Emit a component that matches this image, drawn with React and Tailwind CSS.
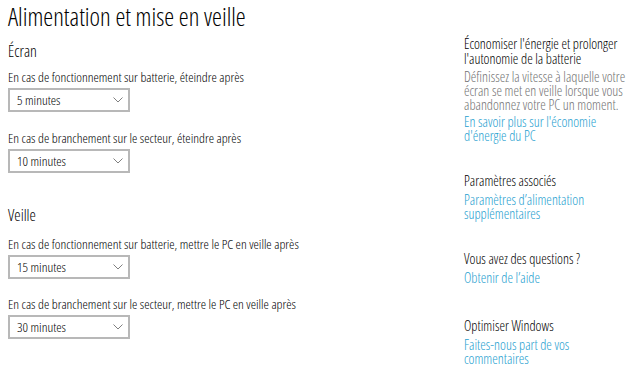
import React from "react";

const font = { fontFamily: '"Open Sans", "Noto Sans", sans-serif', fontStretch: "75%" };

function Chevron() {
  return (
    <svg width="10" height="6" viewBox="0 0 10 6" className="block">
      <path d="M0.5 0.5 L5 5 L9.5 0.5" fill="none" stroke="#808080" strokeWidth="1" />
    </svg>
  );
}

function Dropdown({ value }) {
  return (
    <div className="mt-[3px] flex h-[24px] w-[122px] items-center justify-between border-2 border-[#b8b8b8] bg-white pl-[7px] pr-[5px]">
      <span className="text-[13.5px] leading-[16px] text-black">{value}</span>
      <Chevron />
    </div>
  );
}

function Setting({ label, value, className = "" }) {
  return (
    <div className={className}>
      <div className="h-[16px] whitespace-nowrap text-[13.5px] leading-[16px] text-black">{label}</div>
      <Dropdown value={value} />
    </div>
  );
}

export default function App() {
  return (
    <div style={font} className="flex h-[371px] w-[633px] overflow-hidden bg-white font-[350] text-black">
      <div className="w-[456px] shrink-0 pl-[8px]">
        <h1 className="mt-[1.5px] h-[28px] whitespace-nowrap text-[25px] font-light leading-[28px]">
          Alimentation et mise en veille
        </h1>
        <h2 className="mt-[11.5px] h-[20px] text-[16px] font-[350] leading-[20px]">Écran</h2>
        <Setting className="mt-[8px]" label="En cas de fonctionnement sur batterie, éteindre après" value="5 minutes" />
        <Setting className="mt-[18px]" label="En cas de branchement sur le secteur, éteindre après" value="10 minutes" />
        <h2 className="mt-[32px] h-[20px] text-[16px] font-[350] leading-[20px]">Veille</h2>
        <Setting className="mt-[11px]" label="En cas de fonctionnement sur batterie, mettre le PC en veille après" value="15 minutes" />
        <Setting className="mt-[17px]" label="En cas de branchement sur le secteur, mettre le PC en veille après" value="30 minutes" />
      </div>
      <div className="w-[177px] shrink-0 whitespace-nowrap pl-[8px]">
        <div className="mt-[36px] text-[14px] leading-[15px] text-black">
          Économiser l'énergie et prolonger
          <br />
          l'autonomie de la batterie
        </div>
        <div className="mt-[3.5px] text-[14px] leading-[14px] text-[#737373]">
          Définissez la vitesse à laquelle votre
          <br />
          écran se met en veille lorsque vous
          <br />
          abandonnez votre PC un moment.
        </div>
        <div className="mt-[3.5px] text-[14px] leading-[14px] text-[#26a0cf]">
          En savoir plus sur l'économie
          <br />
          d'énergie du PC
        </div>
        <div className="mt-[29.5px] text-[14px] leading-[15px] text-black">Paramètres associés</div>
        <div className="mt-[5px] text-[14px] leading-[14px] text-[#26a0cf]">
          Paramètres d’alimentation
          <br />
          supplémentaires
        </div>
        <div className="mt-[30.5px] text-[14px] leading-[15px] text-black">Vous avez des questions ?</div>
        <div className="mt-[5px] text-[14px] leading-[14px] text-[#26a0cf]">Obtenir de l’aide</div>
        <div className="mt-[32.5px] text-[14px] leading-[15px] text-black">Optimiser Windows</div>
        <div className="mt-[5px] text-[14px] leading-[14px] text-[#26a0cf]">
          Faites-nous part de vos
          <br />
          commentaires
        </div>
      </div>
    </div>
  );
}
